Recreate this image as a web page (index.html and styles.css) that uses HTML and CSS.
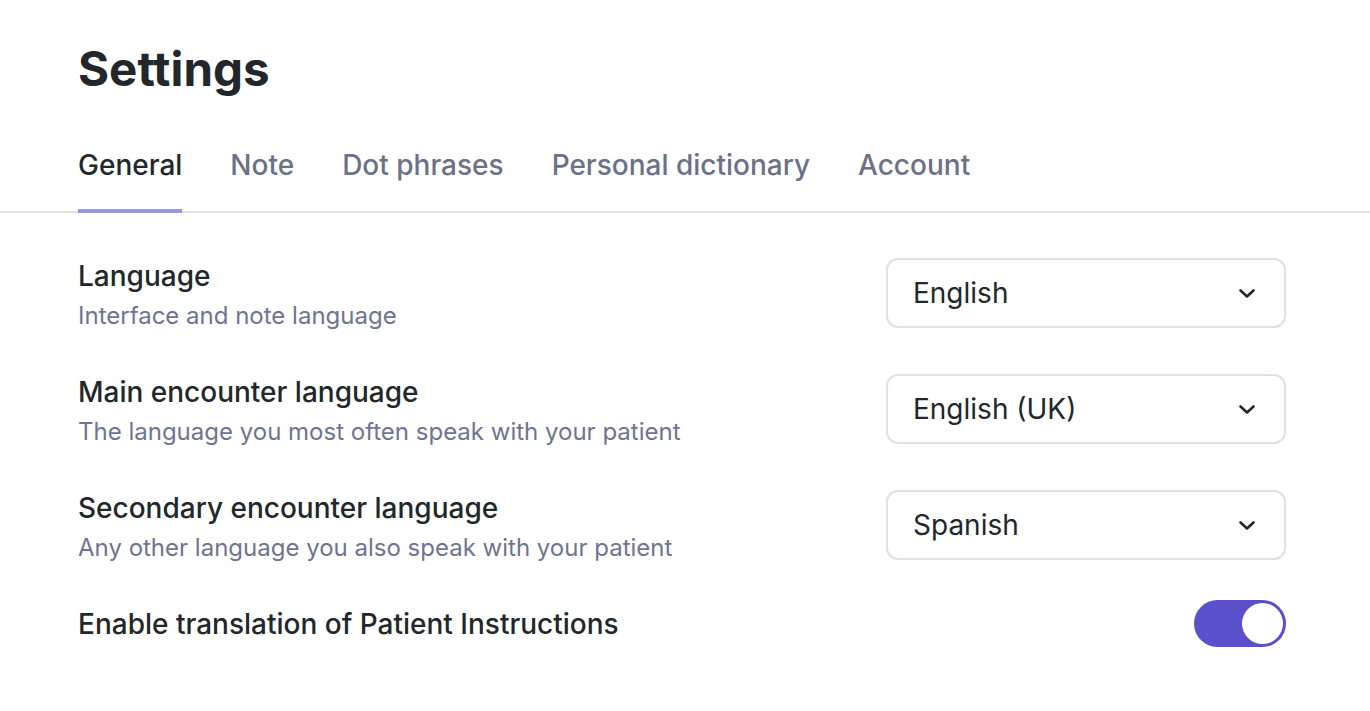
FILE: index.html
```html
<!DOCTYPE html>
<html lang="en">
  <head>
    <meta charset="UTF-8" />
    <meta name="viewport" content="width=device-width, initial-scale=1.0" />
    <title>Settings</title>
    <link rel="stylesheet" href="styles.css">
  </head>
  <body>
    <div class="page">
      <h1 class="title">Settings</h1>

      <nav class="tabs">
        <a class="tab active" href="#">General</a>
        <a class="tab" href="#">Note</a>
        <a class="tab" href="#">Dot phrases</a>
        <a class="tab" href="#">Personal dictionary</a>
        <a class="tab" href="#">Account</a>
      </nav>

      <div class="rows">
        <div class="row">
          <div class="info">
            <div class="label">Language</div>
            <div class="hint">Interface and note language</div>
          </div>
          <div class="select">
            <span>English</span>
            <svg class="chevron" viewBox="0 0 20 20" width="20" height="20">
              <path d="M3.5 7.5l6.5 6 6.5-6" />
            </svg>
          </div>
        </div>

        <div class="row">
          <div class="info">
            <div class="label">Main encounter language</div>
            <div class="hint">The language you most often speak with your patient</div>
          </div>
          <div class="select">
            <span>English (UK)</span>
            <svg class="chevron" viewBox="0 0 20 20" width="20" height="20">
              <path d="M3.5 7.5l6.5 6 6.5-6" />
            </svg>
          </div>
        </div>

        <div class="row">
          <div class="info">
            <div class="label">Secondary encounter language</div>
            <div class="hint">Any other language you also speak with your patient</div>
          </div>
          <div class="select">
            <span>Spanish</span>
            <svg class="chevron" viewBox="0 0 20 20" width="20" height="20">
              <path d="M3.5 7.5l6.5 6 6.5-6" />
            </svg>
          </div>
        </div>

        <div class="row row-toggle">
          <div class="label">Enable translation of Patient Instructions</div>
          <div class="toggle on"><span class="knob"></span></div>
        </div>
      </div>
    </div>
  </body>
</html>
```

FILE: styles.css
```css
body {
  margin: 0;
  font-family: Inter, "Noto Sans", sans-serif;
  color: #22272b;
  background: #fff;
}
.page {
  padding-top: 40px;
}
.title {
  margin: 0 0 49px 78px;
  font-size: 47.5px;
  line-height: 58px;
  font-weight: 700;
}
.tabs {
  display: flex;
  gap: 48px;
  padding-left: 78px;
  border-bottom: 2px solid #e0e2e9;
}
.tab {
  font-size: 28px;
  line-height: 36px;
  font-weight: 500;
  color: #6b7186;
  text-decoration: none;
  padding-bottom: 26px;
  border-bottom: 4px solid transparent;
  margin-bottom: -2px;
}
.tab.active {
  color: #22272b;
  border-bottom-color: #939ae0;
}
.rows {
  display: flex;
  flex-direction: column;
  gap: 40px;
  padding: 45px 84px 0 78px;
}
.row {
  display: flex;
  justify-content: space-between;
  align-items: flex-start;
}
.label {
  font-size: 28px;
  line-height: 36px;
  font-weight: 500;
}
.hint {
  margin-top: 4px;
  font-size: 24px;
  line-height: 36px;
  color: #6e7491;
}
.select {
  box-sizing: border-box;
  width: 400px;
  height: 70px;
  display: flex;
  align-items: center;
  justify-content: space-between;
  padding: 0 27px 0 25px;
  border: 2px solid #dfe0e8;
  border-radius: 12px;
  font-size: 28px;
}
.chevron {
  fill: none;
  stroke: #22272b;
  stroke-width: 2.6;
  stroke-linecap: round;
  stroke-linejoin: round;
}
.row-toggle {
  align-items: center;
  margin-top: -6px;
}
.toggle {
  box-sizing: border-box;
  width: 92px;
  height: 47px;
  border-radius: 24px;
  background: #5a50c9;
  padding: 3px;
  display: flex;
}
.toggle.on {
  justify-content: flex-end;
}
.knob {
  width: 41px;
  height: 41px;
  border-radius: 50%;
  background: #fff;
}
```
